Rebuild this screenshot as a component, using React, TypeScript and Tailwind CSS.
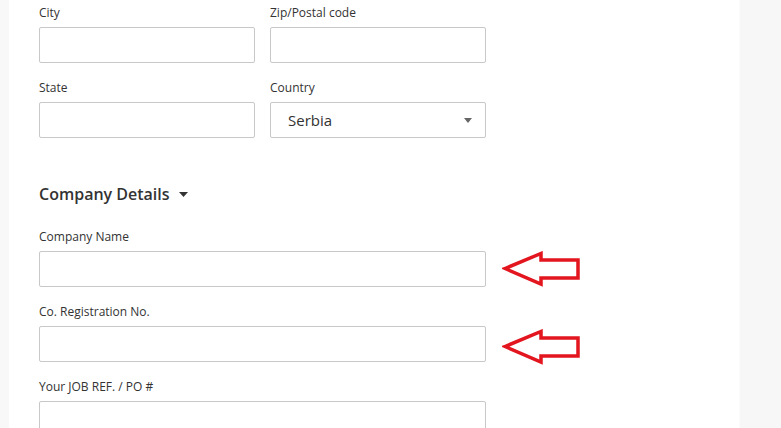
import React from "react";

const font = { fontFamily: '"Open Sans", "Noto Sans", Arial, sans-serif' };

function Label({ children }: { children: React.ReactNode }) {
  return <div className="text-[12px] leading-[18px] text-[#333]">{children}</div>;
}

function Input({ w }: { w: string }) {
  return <div className={`${w} h-[36px] mt-[5px] rounded-[2px] border border-[#c8c8c8] bg-white`} />;
}

function Arrow() {
  return (
    <svg width="80" height="36" viewBox="0 0 80 36" className="shrink-0">
      <polygon
        points="3,17.5 39,2.5 39,9 76,9 76,27 39,27 39,33"
        fill="none"
        stroke="#e3161f"
        strokeWidth="3.5"
        strokeLinejoin="miter"
      />
    </svg>
  );
}

export default function App() {
  return (
    <div className="flex h-[428px] w-[781px] overflow-hidden bg-[#f7f7f7]" style={font}>
      <div className="w-[9px] shrink-0 bg-[#f8f8f8]" />
      <div className="w-[730px] shrink-0 bg-white pl-[30px] pt-[4px]">
        <div className="flex gap-[15px]">
          <div>
            <Label>City</Label>
            <Input w="w-[216px]" />
          </div>
          <div>
            <Label>Zip/Postal code</Label>
            <Input w="w-[216px]" />
          </div>
        </div>
        <div className="mt-[16px] flex gap-[15px]">
          <div>
            <Label>State</Label>
            <Input w="w-[216px]" />
          </div>
          <div>
            <Label>Country</Label>
            <div className="mt-[5px] flex h-[36px] w-[216px] items-center justify-between rounded-[2px] border border-[#c8c8c8] bg-white pl-[17px] pr-[13px]">
              <span className="text-[15px] text-[#333]">Serbia</span>
              <svg width="8" height="5" viewBox="0 0 8 5">
                <polygon points="0,0 8,0 4,5" fill="#666" />
              </svg>
            </div>
          </div>
        </div>

        <div className="mt-[44px] flex items-center h-[24px]">
          <span className="text-[16px] font-semibold leading-[24px] text-[#333]">Company Details</span>
          <svg width="9" height="5" viewBox="0 0 9 5" className="ml-[9px]">
            <polygon points="0,0 9,0 4.5,5" fill="#333" />
          </svg>
        </div>

        <div className="mt-[22px]">
          <Label>Company Name</Label>
          <div className="flex h-[41px] items-start">
            <Input w="w-[447px]" />
            <div className="ml-[16px] mt-[5px]">
              <Arrow />
            </div>
          </div>
        </div>
        <div className="mt-[16px]">
          <Label>Co. Registration No.</Label>
          <div className="flex h-[41px] items-start">
            <Input w="w-[447px]" />
            <div className="ml-[16px] mt-[8px]">
              <Arrow />
            </div>
          </div>
        </div>
        <div className="mt-[16px]">
          <Label>Your JOB REF. / PO #</Label>
          <Input w="w-[447px]" />
        </div>
      </div>
      <div className="flex-1 border-l border-[#fbfbfb] bg-[#f7f7f7]" />
    </div>
  );
}
